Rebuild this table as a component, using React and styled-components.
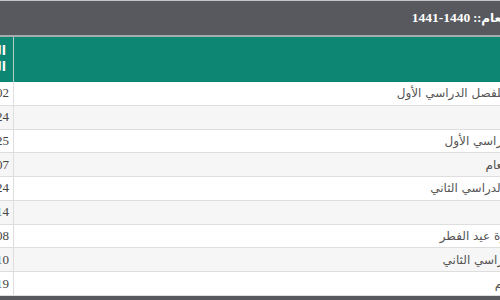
import React from "react";
import styled, { createGlobalStyle } from "styled-components";

const HIDDEN_LEFT = 76;
const HIDDEN_RIGHT = 80;

const GlobalStyle = createGlobalStyle`
  html, body {
    margin: 0;
    padding: 0;
    background: #ffffff;
    overflow: hidden;
  }
  #root {
    width: 500px;
    height: 300px;
    overflow: hidden;
  }
`;

const Page = styled.div`
  direction: rtl;
  width: ${500 + HIDDEN_LEFT + HIDDEN_RIGHT}px;
  margin-left: -${HIDDEN_LEFT}px;
`;

const TitleBar = styled.div`
  height: 34px;
  background: #58595e;
  border-top: 1px solid #c3c4c6;
  border-bottom: 2px solid #a6acac;
  display: flex;
  align-items: center;
  gap: 3px;
  padding-right: ${HIDDEN_RIGHT - 10}px;
  color: #ffffff;
  font-family: "Liberation Serif", "DejaVu Sans", serif;
  font-weight: bold;
  font-size: 12px;
`;

const Years = styled.span`
  direction: ltr;
  unicode-bidi: isolate;
  font-size: 13.5px;
`;

const Table = styled.div`
  display: flex;
  flex-direction: column;
`;

const HeadRow = styled.div`
  display: flex;
  height: 45px;
  background: #0e8674;
  color: #ffffff;
  font-family: "DejaVu Sans", sans-serif;
  font-weight: bold;
  font-size: 12.5px;
`;

const HeadCell = styled.div`
  flex: ${(p) => (p.$wide ? 1 : "none")};
  width: ${(p) => (p.$wide ? "auto" : "90px")};
  box-sizing: border-box;
  display: flex;
  flex-direction: column;
  justify-content: center;
  padding-right: 7px;
  border-right: ${(p) => (p.$wide ? "none" : "1px solid #b9c9c6")};
  line-height: 16px;
  padding-bottom: 2px;
`;

const Row = styled.div`
  display: flex;
  height: 23.78px;
  box-sizing: border-box;
  border-bottom: 1px solid #dedede;
  background: ${(p) => (p.$striped ? "#f6f6f6" : "#ffffff")};
`;

const EventCell = styled.div`
  flex: 1;
  display: flex;
  align-items: center;
  padding-right: ${(p) => p.$inset}px;
  color: #555555;
  font-family: "DejaVu Sans", sans-serif;
  font-size: 12px;
  white-space: nowrap;
  overflow: hidden;
`;

const DateCell = styled.div`
  width: 90px;
  box-sizing: border-box;
  display: flex;
  align-items: center;
  padding-right: 4px;
  border-right: 1px solid #dedede;
  color: #444444;
  font-family: "Liberation Serif", serif;
  font-size: 13px;
  white-space: nowrap;
`;

const NextBar = styled.div`
  height: 20px;
  background: #58595e;
`;

const rows = [
  { event: "بداية الدراسة للفصل الدراسي الأول", date: "1441/01/02", inset: 6 },
  { event: "", date: "1441/01/24", inset: 8 },
  { event: "نهاية الفصل الدراسي الأول", date: "1441/04/25", inset: 2 },
  { event: "إجازة منتصف العام", date: "1441/05/07", inset: 0 },
  { event: "بداية الفصل الدراسي الثاني", date: "1441/05/24", inset: 13 },
  { event: "", date: "1441/07/14", inset: 8 },
  { event: "بداية إجازة عيد الفطر", date: "1441/09/08", inset: 33 },
  { event: "نهاية الفصل الدراسي الثاني", date: "1441/10/10", inset: 1 },
  { event: "إجازة نهاية العام", date: "1441/10/19", inset: 5 },
];

export default function App() {
  return (
    <>
      <GlobalStyle />
      <Page>
        <TitleBar>
          <span>العام::</span>
          <Years>1441-1440</Years>
        </TitleBar>
        <Table>
          <HeadRow>
            <HeadCell $wide />
            <HeadCell>
              <span>التاريخ</span>
              <span>الهجري</span>
            </HeadCell>
          </HeadRow>
          {rows.map((r, i) => (
            <Row key={i} $striped={i % 2 === 1}>
              <EventCell $inset={r.inset}>{r.event}</EventCell>
              <DateCell>{r.date}</DateCell>
            </Row>
          ))}
        </Table>
        <NextBar />
      </Page>
    </>
  );
}
